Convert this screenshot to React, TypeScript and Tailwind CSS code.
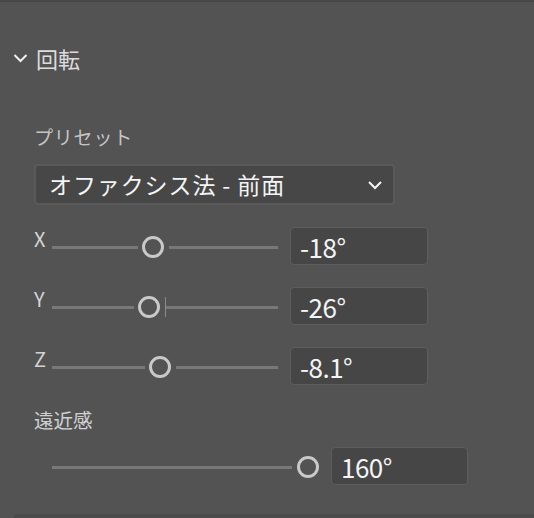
import React from 'react';

const font = { fontFamily: '"Noto Sans CJK JP", "Noto Sans", sans-serif' };

interface SliderRowProps {
  label: string;
  left: number;
  value: string;
  tick?: boolean;
}

const Thumb: React.FC = () => (
  <div className="h-[22px] w-[22px] shrink-0 rounded-full border-[3px] border-[#c9c9c9]" />
);

const ValueBox: React.FC<{ value: string; width: string }> = ({ value, width }) => (
  <div
    className={`flex h-[38px] ${width} shrink-0 items-center rounded-[4px] border border-[#5d5d5d] bg-[#464646] pl-[9px] pt-[2px] text-[26px] leading-none tracking-[-0.5px] text-[#f4f4f4]`}
  >
    {value}
  </div>
);

const SliderRow: React.FC<SliderRowProps> = ({ label, left, value, tick }) => (
  <div className="flex h-[38px] items-center">
    <div className="w-[18px] self-start text-[20px] leading-[24px] text-[#d4d4d4]">{label}</div>
    <div className="flex w-[226px] items-center pt-[2px]">
      <div className="h-[3px] bg-[#787878]" style={{ width: left }} />
      <div className="w-[4px]" />
      <Thumb />
      {tick ? (
        <>
          <div className="w-[5px]" />
          <div className="h-[20px] w-px bg-[#8a8a8a]" />
        </>
      ) : (
        <div className="w-[5px]" />
      )}
      <div className="h-[3px] flex-1 bg-[#787878]" />
    </div>
    <div className="w-[12px]" />
    <ValueBox value={value} width="w-[138px]" />
  </div>
);

export default function App() {
  return (
    <div className="h-[518px] w-[534px] overflow-hidden bg-[#535353]" style={font}>
      <div className="h-[2px] bg-[#474747]" />
      {/* header */}
      <div className="mt-[38px] flex h-[36px] items-center pl-[13px]">
        <svg width="15" height="10" viewBox="0 0 15 10" className="mr-[8px]">
          <path d="M1.5 2 L7.5 8 L13.5 2" fill="none" stroke="#f0f0f0" strokeWidth="2" />
        </svg>
        <span className="text-[22px] text-[#dcdcdc]">回転</span>
      </div>

      <div className="pl-[34px]">
        <div className="mt-[48px] h-[26px] text-[19px] leading-[26px] tracking-[0.8px] text-[#c4c4c4]">プリセット</div>

        <div className="mt-[14px] flex h-[41px] w-[361px] items-center justify-between rounded-[4px] border-2 border-[#5a5a5a] bg-[#474747] pl-[13px] pr-[10px]">
          <span className="text-[23px] tracking-[0.9px] text-[#f4f4f4]">オファクシス法 - 前面</span>
          <svg width="16" height="16" viewBox="0 0 16 16">
            <path d="M2 5 L8 11 L14 5" fill="none" stroke="#f4f4f4" strokeWidth="2" />
          </svg>
        </div>

        <div className="mt-[22px] flex flex-col gap-[22px]">
          <SliderRow label="X" left={86} value="-18°" />
          <SliderRow label="Y" left={82} value="-26°" tick />
          <SliderRow label="Z" left={93} value="-8.1°" />
        </div>

        <div className="mt-[22px] h-[26px] text-[19.5px] leading-[26px] text-[#d0d0d0]">遠近感</div>

        <div className="mt-[14px] flex h-[38px] items-center">
          <div className="w-[18px]" />
          <div className="flex items-center pt-[2px]">
            <div className="h-[3px] w-[240px] bg-[#787878]" />
            <div className="w-[5px]" />
            <Thumb />
          </div>
          <div className="w-[12px]" />
          <ValueBox value="160°" width="w-[137px]" />
        </div>
      </div>

      <div className="ml-[14px] mt-[29px] h-[4px] bg-[#4b4b4b]" />
    </div>
  );
}
